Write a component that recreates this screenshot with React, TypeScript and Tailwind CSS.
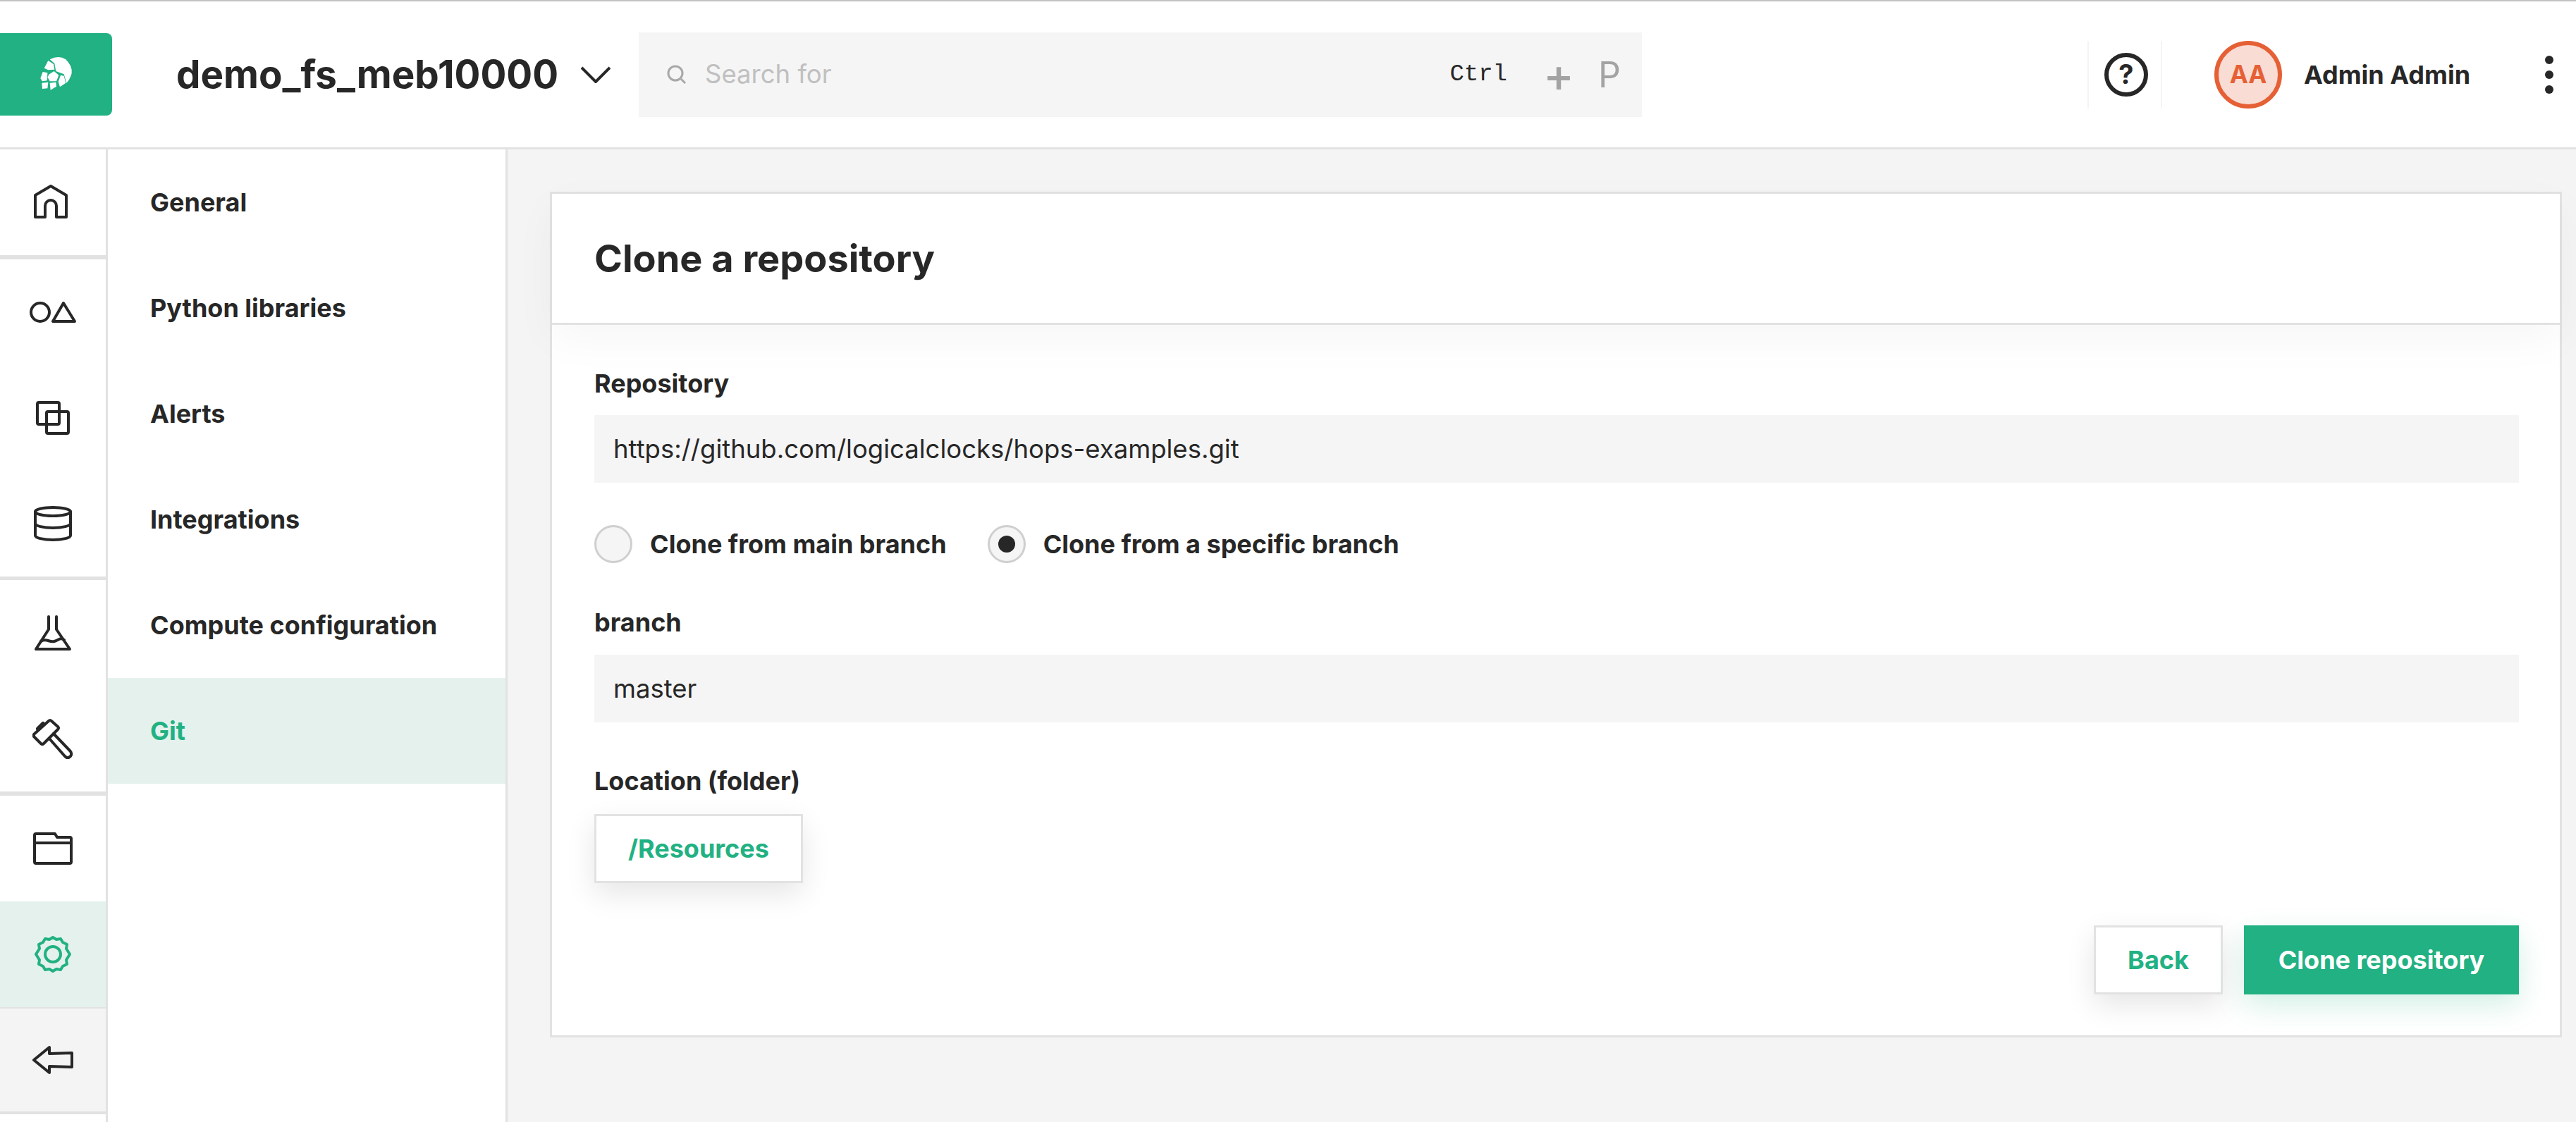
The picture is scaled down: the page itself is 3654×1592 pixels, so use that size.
const GREEN = '#21b182'

const Logo = () => (
  <svg width="80" height="80" viewBox="0 0 240 240" fill="#fff">
    <path d="M92 55Q130 35 160 55Q190 85 185 115Q178 140 163 155L152 118L118 105L112 72Z" />
    <path d="M85 60L108 75L112 98L85 100L68 92Z" />
    <path d="M62 108L82 112L80 145L60 148L52 135Z" />
    <path d="M90 118L110 105L130 122L120 148L92 148L82 130Z" />
    <path d="M138 122L152 125L160 155L135 172L128 150Z" />
    <path d="M58 155L85 152L82 178L60 180Z" />
    <path d="M92 155L118 152L120 170L95 185Z" />
  </svg>
)

const Icon = ({ children, w = 64, h = 64, color = '#272727', box }: { children: React.ReactNode; w?: number; h?: number; color?: string; box?: string }) => (
  <svg width={w} height={h} viewBox={box ?? `0 0 ${w} ${h}`} fill="none" stroke={color} strokeWidth="4" strokeLinejoin="round" strokeLinecap="round">
    {children}
  </svg>
)

const IconRow = ({ children, className = '' }: { children: React.ReactNode; className?: string }) => (
  <div className={`flex h-[150px] items-center justify-center ${className}`}>{children}</div>
)

const Divider = () => <div className="h-[6px] bg-[#e2e2e2]" />

const menu = ['General', 'Python libraries', 'Alerts', 'Integrations', 'Compute configuration', 'Git']

const Label = ({ children, className = '' }: { children: React.ReactNode; className?: string }) => (
  <div className={`text-[36px] leading-[44px] font-bold text-[#272727] ${className}`}>{children}</div>
)

const Field = ({ value }: { value: string }) => (
  <div className="flex h-[96px] items-center bg-[#f5f5f5] px-[27px] text-[36.5px] text-[#272727]">{value}</div>
)

const Radio = ({ label, checked = false }: { label: string; checked?: boolean }) => (
  <div className="flex items-center gap-[25px]">
    <div className="flex h-[54px] w-[54px] items-center justify-center rounded-full border-[3px] border-[#cfcfcf] bg-[#f5f5f5]">
      {checked && <div className="h-[24px] w-[24px] rounded-full bg-[#272727]" />}
    </div>
    <span className="text-[36px] font-bold text-[#272727]">{label}</span>
  </div>
)

export default function App() {
  return (
    <div className="flex h-[1592px] w-[3654px] flex-col overflow-hidden bg-white font-['Inter',sans-serif] text-[#272727]">
      <header className="flex h-[212px] shrink-0 items-center border-t-2 border-b-[3px] border-t-[#c2c2c2] border-b-[#e2e2e2]">
        <div className="flex h-[117px] w-[159px] items-center justify-center rounded-r-[8px] bg-[#21b182]">
          <Logo />
        </div>
        <div className="ml-[91px] text-[54.7px] font-bold">demo_fs_meb10000</div>
        <svg className="ml-[32px]" width="42" height="24" viewBox="0 0 42 24" fill="none" stroke="#272727" strokeWidth="4">
          <path d="M1 2l20 20 20-20" />
        </svg>
        <div className="ml-[40px] flex h-[120px] w-[1423px] items-center bg-[#f5f5f5] pl-[40px]">
          <svg width="28" height="28" viewBox="0 0 28 28" fill="none" stroke="#a8a8a8" strokeWidth="3">
            <circle cx="12" cy="12" r="10" />
            <path d="M20 20l6 6" />
          </svg>
          <span className="ml-[26px] text-[36.5px] text-[#c0c0c0]">Search for</span>
          <span className="ml-auto font-['Liberation_Mono',monospace] text-[34px] text-[#272727]">Ctrl</span>
          <span className="ml-[51px] text-[66px] leading-none font-medium text-[#a3a3a3]">+</span>
          <span className="ml-[34px] mr-[30px] text-[50px] leading-none text-[#a3a3a3]">P</span>
        </div>
        <div className="ml-[632px] flex h-[96px] w-[106px] items-center justify-center border-x-2 border-[#f4f4f4] pl-[3px]">
          <svg width="62" height="62" viewBox="0 0 62 62" fill="none">
            <circle cx="31" cy="31" r="28" stroke="#272727" strokeWidth="6" />
            <text x="31" y="44" textAnchor="middle" fontSize="38" fontWeight="700" fill="#272727" fontFamily="Inter">?</text>
          </svg>
        </div>
        <div className="ml-[74px] flex h-[96px] w-[96px] items-center justify-center rounded-full border-[6px] border-[#e66035] bg-[#f9dcd3] text-[35px] font-bold text-[#e66035]">
          AA
        </div>
        <div className="ml-[31px] text-[36px] font-bold">Admin Admin</div>
        <div className="ml-[106px] flex flex-col gap-[9px]">
          <div className="h-[12px] w-[12px] rounded-full bg-[#272727]" />
          <div className="h-[12px] w-[12px] rounded-full bg-[#272727]" />
          <div className="h-[12px] w-[12px] rounded-full bg-[#272727]" />
        </div>
      </header>
      <div className="flex min-h-0 flex-1">
        <nav className="w-[153px] shrink-0 border-r-[3px] border-[#e2e2e2]">
          <IconRow className="pr-[6px]">
            <Icon>
              <path d="M32 9L10 22v31h14V37a8 8 0 0 1 16 0v16h14V22z" />
            </Icon>
          </IconRow>
          <Divider />
          <IconRow>
            <Icon w={66} h={34}>
              <circle cx="15" cy="17" r="13" />
              <path d="M48 4L33 30h31z" />
            </Icon>
          </IconRow>
          <IconRow>
            <Icon w={48} h={48}>
              <rect x="2" y="2" width="31" height="31" rx="2" />
              <rect x="15" y="15" width="31" height="31" rx="2" />
            </Icon>
          </IconRow>
          <IconRow>
            <Icon w={54} h={54}>
              <ellipse cx="27" cy="10" rx="25" ry="6" />
              <path d="M2 10v34c0 3 11 6 25 6s25-3 25-6V10" />
              <path d="M2 27c0 3 11 6 25 6s25-3 25-6" />
            </Icon>
          </IconRow>
          <div className="h-[5px] bg-[#e2e2e2]" />
          <IconRow>
            <Icon w={54} h={54} box="20 10 54 54">
              <path d="M41 14v18L23 60h48L52 32V14" />
              <path d="M30 49c8-5 12 2 19 0s8-6 14-2" />
            </Icon>
          </IconRow>
          <IconRow>
            <Icon w={60} h={62} box="16 158 60 62">
              <path d="M19 183L40 164Q42 162 44 164L53 172Q55 174 53 176L33 196Q31 198 29 196L19 186Z" />
              <path d="M25 175L32 168" strokeWidth="6" />
              <path d="M41 189L63 214Q67 218 71 214Q74 210 70 206L47 182" />
            </Icon>
          </IconRow>
          <Divider />
          <IconRow>
            <Icon w={56} h={46}>
              <path d="M2 4a2 2 0 0 1 2-2h27l3 5h18a2 2 0 0 1 2 2v33a2 2 0 0 1-2 2H4a2 2 0 0 1-2-2z" />
              <path d="M2 15h52" />
            </Icon>
          </IconRow>
          <IconRow className="bg-[#e5f1ec]">
            <Icon w={52} h={52} color={GREEN}>
              <path d="M26 2l5 3 6-1 3 5 6 3-1 6 5 8-5 8 1 6-6 3-3 5-6-1-5 3-5-3-6 1-3-5-6-3 1-6-5-8 5-8-1-6 6-3 3-5 6 1z" />
              <circle cx="26" cy="26" r="11" />
            </Icon>
          </IconRow>
          <div className="h-[2px] bg-[#e2e2e2]" />
          <IconRow className="!h-[146px] bg-[#f4f4f4]">
            <Icon w={58} h={42}>
              <path d="M2 21L24 3v9l32-1v20l-32-1v9z" />
            </Icon>
          </IconRow>
          <div className="h-[4px] bg-[#e2e2e2]" />
        </nav>
        <aside className="w-[567px] shrink-0 border-r-[3px] border-[#e2e2e2]">
          {menu.map((item) => (
            <div
              key={item}
              className={`flex h-[150px] items-center pl-[60px] text-[36px] font-bold ${item === 'Git' ? 'bg-[#e5f1ec] text-[#21b182]' : 'text-[#272727]'}`}
            >
              {item}
            </div>
          ))}
        </aside>
        <main className="min-w-0 flex-1 bg-[#f4f4f4] pt-[60px] pr-[20px] pl-[60px]">
          <div className="h-[1200px] border-[3px] border-[#e2e2e2] bg-white">
            <div className="flex h-[186px] items-center border-b-[3px] border-[#e2e2e2] pl-[60px] text-[54px] font-bold shadow-[0_20px_60px_rgba(0,0,0,0.04)]">
              Clone a repository
            </div>
            <div className="pt-[61px] pr-[58px] pl-[60px]">
              <Label className="mb-[23px]">Repository</Label>
              <Field value="https://github.com/logicalclocks/hops-examples.git" />
              <div className="mt-[60px] flex gap-[58px]">
                <Radio label="Clone from main branch" />
                <Radio label="Clone from a specific branch" checked />
              </div>
              <Label className="mt-[62px] mb-[24px]">branch</Label>
              <Field value="master" />
              <Label className="mt-[61px] mb-[25px]">Location (folder)</Label>
              <div className="flex h-[98px] w-[296px] items-center justify-center border-[3px] border-[#e2e2e2] bg-white text-[36px] font-bold text-[#21b182] shadow-[0_15px_40px_rgba(0,0,0,0.1)]">
                /Resources
              </div>
              <div className="mt-[60px] flex justify-end gap-[30px]">
                <div className="flex h-[98px] w-[183px] items-center justify-center border-[3px] border-[#e2e2e2] bg-white text-[36px] font-bold text-[#21b182] shadow-[0_15px_40px_rgba(0,0,0,0.1)]">
                  Back
                </div>
                <div className="flex h-[98px] w-[390px] items-center justify-center bg-[#21b182] text-[36px] font-bold text-white shadow-[0_15px_40px_rgba(33,177,130,0.2)]">
                  Clone repository
                </div>
              </div>
            </div>
          </div>
        </main>
      </div>
    </div>
  )
}
